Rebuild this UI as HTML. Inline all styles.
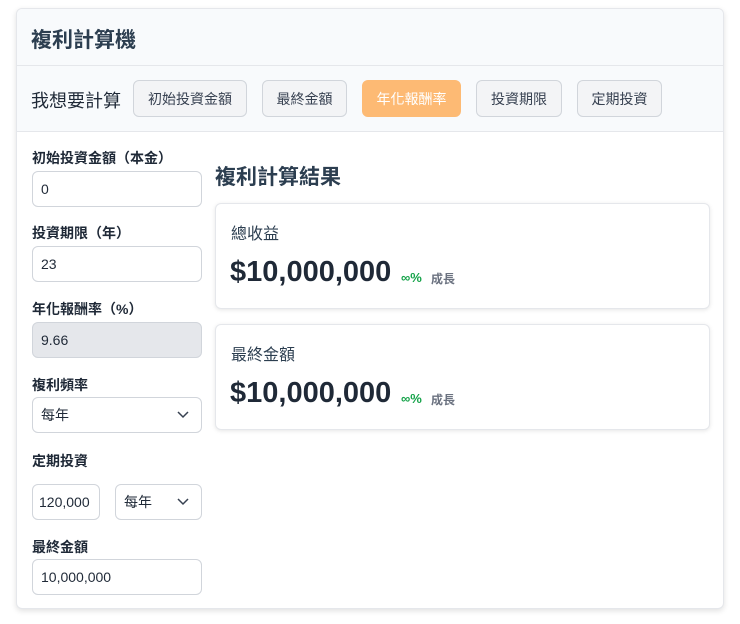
<!DOCTYPE html>
<html><head><meta charset="utf-8"><style>
*{box-sizing:border-box;margin:0;padding:0}
body{width:740px;height:624px;background:#fff;font-family:"Liberation Sans","Noto Sans CJK TC",sans-serif;position:relative;overflow:hidden;color:#1f2937}
.card{position:absolute;left:16px;top:8px;width:708px;height:601px;border:1px solid #e5e7eb;border-radius:6px;box-shadow:0 2px 6px rgba(0,0,0,.12);background:#fff;overflow:hidden}
.hd{position:absolute;left:0;top:0;width:100%;height:57px;background:#f8fafc;border-bottom:1px solid #e5e7eb}
.hd h1{position:absolute;left:14px;top:15px;font-size:21px;font-weight:bold;color:#2c3e50}
.nav{position:absolute;left:0;top:57px;width:100%;height:66px;background:#f8fafc;border-bottom:1px solid #e5e7eb}
.nav .t{position:absolute;left:14px;top:21px;font-size:18px;color:#1f2937}
.b{position:absolute;top:14px;height:37px;border:1px solid #d1d5db;border-radius:6px;background:#f3f4f6;font-size:14px;display:flex;align-items:center;justify-content:center;color:#374151}
.b.on{background:#fdba74;border-color:#fdba74;color:#fff}
.lb{position:absolute;left:15px;font-size:14px;font-weight:bold;color:#1f2937}
.in{position:absolute;height:36px;border:1px solid #d1d5db;border-radius:6px;font-size:14px;padding-left:8px;display:flex;align-items:center;background:#fff}
.in.g{background:#e5e7eb}
.ch{position:absolute;right:12px;top:13px}
.rt{position:absolute;left:198px;top:152px;font-size:21px;font-weight:bold;color:#2c3e50}
.rc{position:absolute;left:198px;width:495px;height:106px;border:1px solid #e5e7eb;border-radius:6px;box-shadow:0 1px 4px rgba(0,0,0,.1);background:#fff}
.rc .l{position:absolute;left:15px;top:16px;font-size:16px;color:#2c3e50}
.rc .v{position:absolute;left:14px;top:52px;font-size:29px;font-weight:bold;color:#1f2937}
.rc .p{position:absolute;left:185px;top:66px;font-size:13px;font-weight:bold;color:#16a34a}
.rc .g{position:absolute;left:215px;top:66px;font-size:12px;font-weight:bold;color:#6b7280}
</style></head><body>
<div class="card">
<div class="hd"><h1>複利計算機</h1></div>
<div class="nav"><span class="t">我想要計算</span>
<div class="b" style="left:116px;width:114px">初始投資金額</div>
<div class="b" style="left:245px;width:85px">最終金額</div>
<div class="b on" style="left:345px;width:99px">年化報酬率</div>
<div class="b" style="left:459px;width:86px">投資期限</div>
<div class="b" style="left:560px;width:85px">定期投資</div>
</div>
<div class="lb" style="top:139px">初始投資金額（本金）</div>
<div class="in" style="left:15px;top:162px;width:170px">0</div>
<div class="lb" style="top:214px">投資期限（年）</div>
<div class="in" style="left:15px;top:237px;width:170px">23</div>
<div class="lb" style="top:290px">年化報酬率（%）</div>
<div class="in g" style="left:15px;top:313px;width:170px">9.66</div>
<div class="lb" style="top:366px">複利頻率</div>
<div class="in" style="left:15px;top:388px;width:170px">每年<svg class="ch" width="12" height="8" viewBox="0 0 12 8"><path d="M1 1l5 5 5-5" fill="none" stroke="#374151" stroke-width="1.5"/></svg></div>
<div class="lb" style="top:442px">定期投資</div>
<div class="in" style="left:15px;top:475px;width:68px;padding-left:6px">120,000</div>
<div class="in" style="left:98px;top:475px;width:87px">每年<svg class="ch" width="12" height="8" viewBox="0 0 12 8"><path d="M1 1l5 5 5-5" fill="none" stroke="#374151" stroke-width="1.5"/></svg></div>
<div class="lb" style="top:528px">最終金額</div>
<div class="in" style="left:15px;top:550px;width:170px">10,000,000</div>
<div class="rt">複利計算結果</div>
<div class="rc" style="top:194px"><div class="l">總收益</div><div class="v">$10,000,000</div><div class="p">∞%</div><div class="g">成長</div></div>
<div class="rc" style="top:315px"><div class="l">最終金額</div><div class="v">$10,000,000</div><div class="p">∞%</div><div class="g">成長</div></div>
</div>
</body></html>
